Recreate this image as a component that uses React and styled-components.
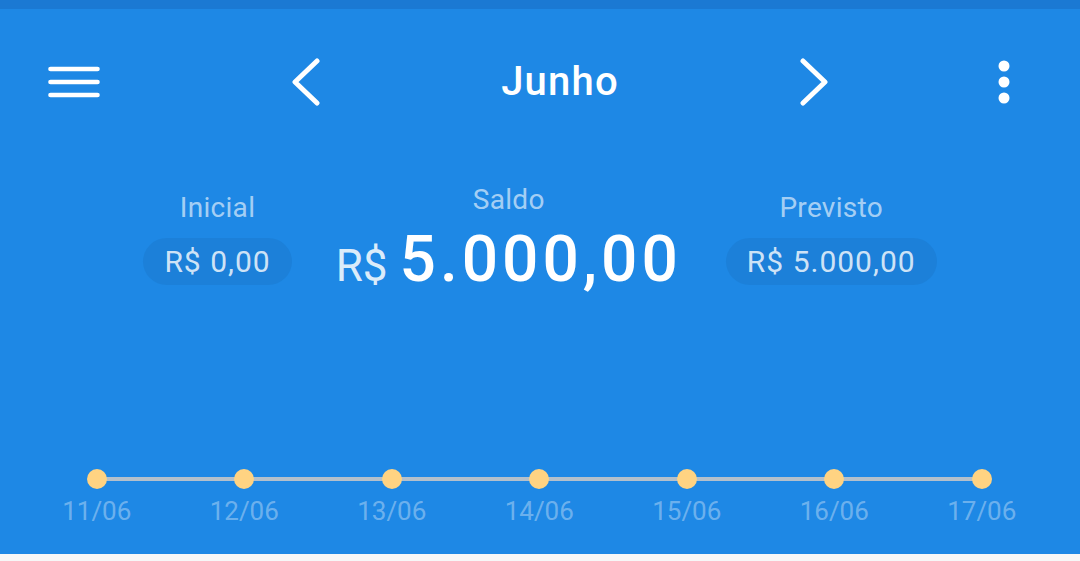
import React from 'react';
import styled, { createGlobalStyle } from 'styled-components';

const GlobalStyle = createGlobalStyle`
    html, body {
        margin: 0;
        padding: 0;
        background: #f7f7f7;
    }
    body {
        font-family: Roboto, "Open Sans", "Liberation Sans", sans-serif;
    }
`

const Screen = styled.div`
    width: 1080px;
    height: 561px;
    display: flex;
    flex-direction: column;
    overflow: hidden;
`

const StatusStrip = styled.div`
    height: 9px;
    background: #1b79d3;
    flex: none;
`

const Panel = styled.div`
    flex: 1;
    display: flex;
    flex-direction: column;
    background: #1e88e5;
    color: #fff;
`

const Header = styled.div`
    height: 146px;
    flex: none;
    display: flex;
    align-items: center;
    justify-content: space-between;
    padding: 0 70px 0 48px;
`

const IconButton = styled.button`
    border: 0;
    padding: 0;
    background: none;
    color: #fff;
    display: flex;
    align-items: center;
    justify-content: center;
    width: ${props => props.w}px;
    height: 50px;
    cursor: pointer;
`

const MonthNav = styled.div`
    display: flex;
    align-items: center;
    gap: 180px;
    margin-left: 22px;
`

const MonthTitle = styled.div`
    font-size: 40px;
    font-weight: 500;
    letter-spacing: 1.2px;
    line-height: 1;
`

const Summary = styled.div`
    display: flex;
    justify-content: center;
    align-items: center;
    gap: 44px;
    padding-top: 28px;
`

const Column = styled.div`
    display: flex;
    flex-direction: column;
    align-items: center;
    gap: ${props => props.gap}px;
`

const Label = styled.div`
    font-size: 28px;
    line-height: 34px;
    letter-spacing: 0.3px;
    color: rgba(255, 255, 255, 0.62);
`

const Pill = styled.div`
    height: 47px;
    padding: 0 21px;
    border-radius: 24px;
    background: #1c80d9;
    display: flex;
    align-items: center;
    font-size: 30px;
    letter-spacing: 1px;
    color: rgba(255, 255, 255, 0.8);
`

const Balance = styled.div`
    display: flex;
    align-items: baseline;
    gap: 12px;
    height: 64px;
    line-height: 64px;
`

const Currency = styled.span`
    font-size: 44px;
    color: rgba(255, 255, 255, 0.85);
`

const Amount = styled.span`
    font-size: 64px;
    font-weight: 500;
    letter-spacing: 4px;
`

const Timeline = styled.div`
    margin-top: auto;
    padding: 0 24px 28px 23px;
    display: grid;
    grid-template-columns: repeat(7, 147.5px);
    position: relative;

    &::before {
        content: '';
        position: absolute;
        left: 97px;
        right: 98px;
        top: 8px;
        height: 4px;
        background: #b4c0cb;
    }
`

const Day = styled.div`
    display: flex;
    flex-direction: column;
    align-items: center;
    position: relative;
`

const Dot = styled.div`
    width: 20px;
    height: 20px;
    border-radius: 50%;
    background: #ffd382;
`

const DayLabel = styled.div`
    margin-top: 7px;
    font-size: 26px;
    line-height: 30px;
    color: rgba(255, 255, 255, 0.36);
`

const BottomStrip = styled.div`
    height: 7px;
    flex: none;
    background: #f7f7f7;
`

const Menu = () => (
    <svg width="52" height="32" viewBox="0 0 52 32">
        <g stroke="#fff" strokeWidth="4.6" strokeLinecap="round">
            <line x1="2.5" y1="3" x2="49.5" y2="3" />
            <line x1="2.5" y1="16" x2="49.5" y2="16" />
            <line x1="2.5" y1="29" x2="49.5" y2="29" />
        </g>
    </svg>
)

const Chevron = ({ dir }) => (
    <svg width="30" height="48" viewBox="0 0 30 48">
        <polyline
            points={dir === 'left' ? '26,3 4,24 26,45' : '4,3 26,24 4,45'}
            fill="none"
            stroke="#fff"
            strokeWidth="5"
            strokeLinecap="round"
            strokeLinejoin="round"
        />
    </svg>
)

const Kebab = () => (
    <svg width="12" height="44" viewBox="0 0 12 44">
        <g fill="#fff">
            <circle cx="6" cy="6" r="5.5" />
            <circle cx="6" cy="22" r="5.5" />
            <circle cx="6" cy="38" r="5.5" />
        </g>
    </svg>
)

const days = ['11/06', '12/06', '13/06', '14/06', '15/06', '16/06', '17/06']

const App = () => (
    <Screen>
        <GlobalStyle />
        <StatusStrip />
        <Panel>
            <Header>
                <IconButton w={52}><Menu /></IconButton>
                <MonthNav>
                    <IconButton w={30}><Chevron dir="left" /></IconButton>
                    <MonthTitle>Junho</MonthTitle>
                    <IconButton w={30}><Chevron dir="right" /></IconButton>
                </MonthNav>
                <IconButton w={12}><Kebab /></IconButton>
            </Header>
            <Summary>
                <Column gap={13}>
                    <Label>Inicial</Label>
                    <Pill>R$ 0,00</Pill>
                </Column>
                <Column gap={11}>
                    <Label>Saldo</Label>
                    <Balance>
                        <Currency>R$</Currency>
                        <Amount>5.000,00</Amount>
                    </Balance>
                </Column>
                <Column gap={13}>
                    <Label>Previsto</Label>
                    <Pill>R$ 5.000,00</Pill>
                </Column>
            </Summary>
            <Timeline>
                {days.map(d => (
                    <Day key={d}>
                        <Dot />
                        <DayLabel>{d}</DayLabel>
                    </Day>
                ))}
            </Timeline>
        </Panel>
        <BottomStrip />
    </Screen>
)

export default App
